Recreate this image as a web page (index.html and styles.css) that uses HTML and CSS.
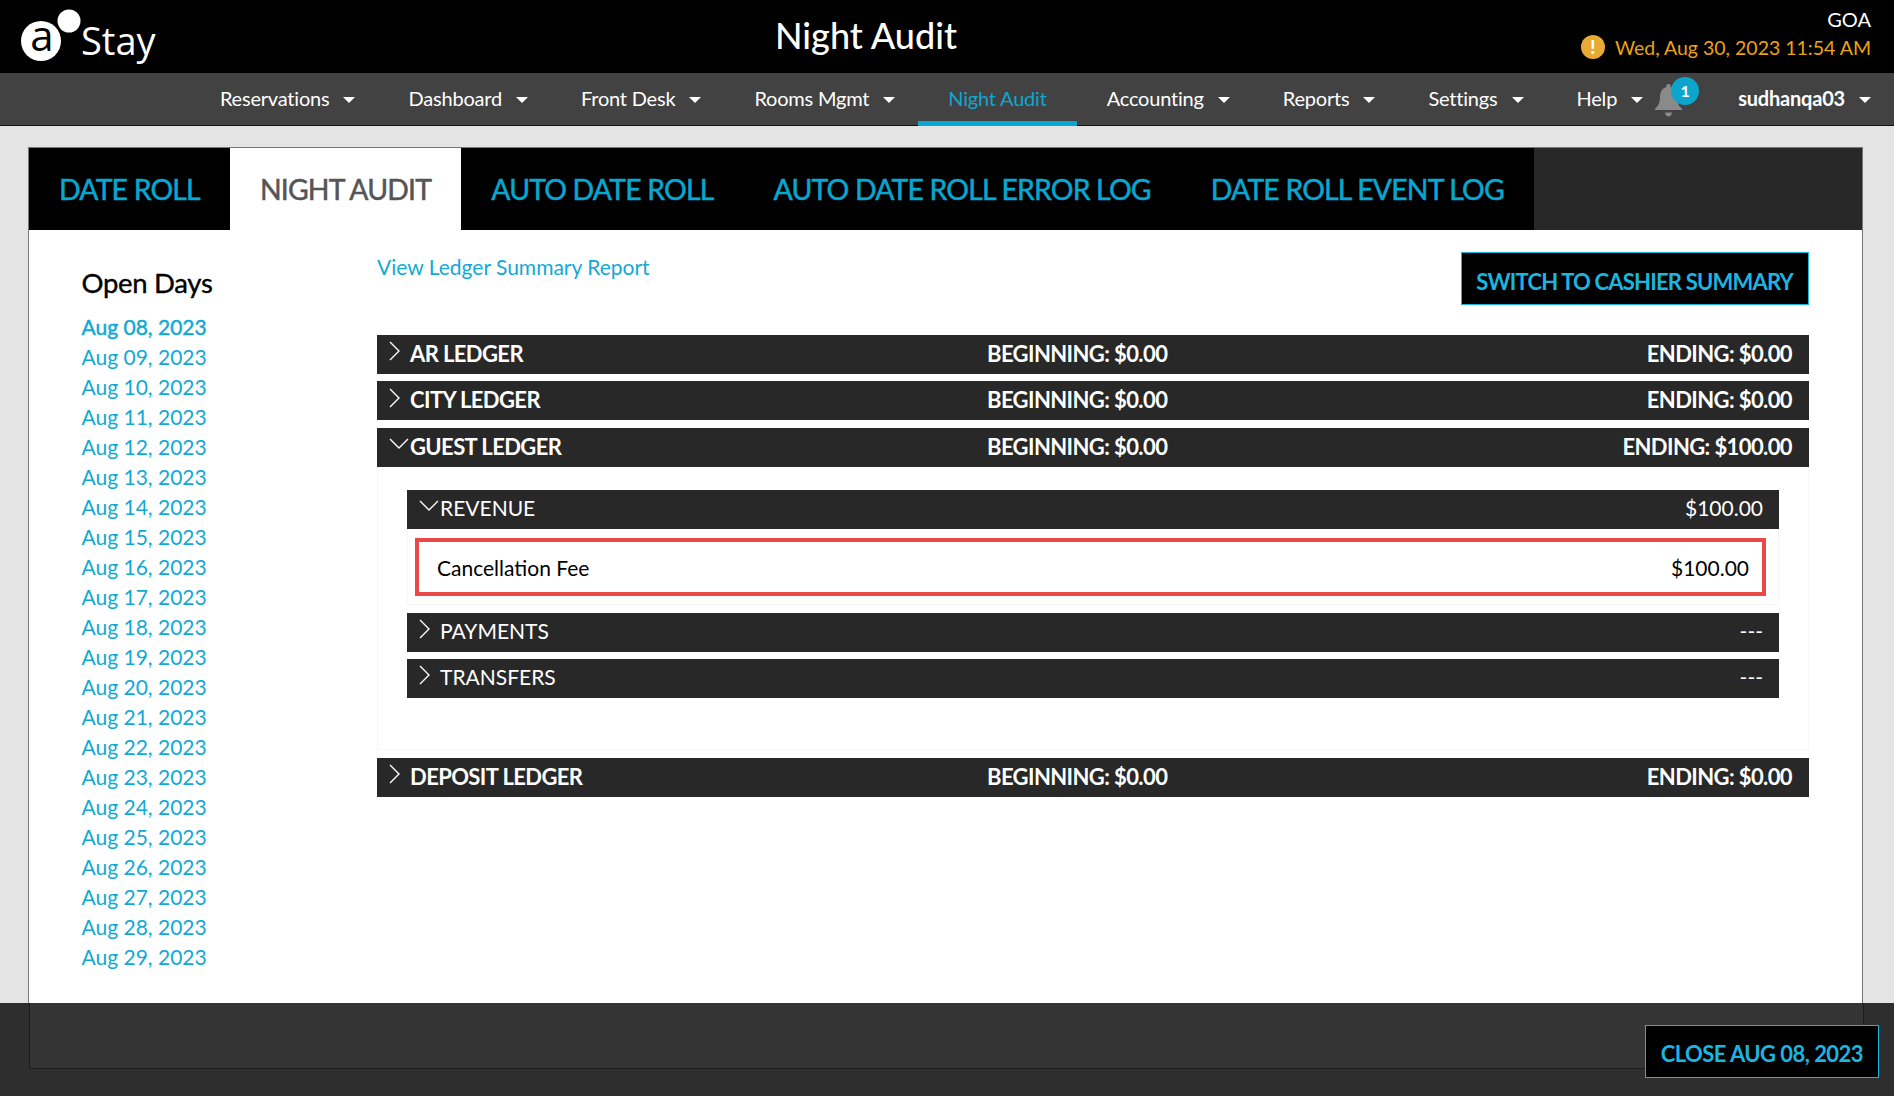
FILE: index.html
```html
<!DOCTYPE html>
<html lang="en">
<head>
<meta charset="utf-8">
<title>Night Audit</title>
<link rel="stylesheet" href="styles.css">
</head>
<body>
<header class="topbar">
  <div class="logo">
    <svg class="logo-mark" width="82" height="70" viewBox="0 0 82 70">
      <circle cx="41" cy="41" r="20" fill="#fff"/>
      <circle cx="69" cy="21" r="11.5" fill="#fff"/>
      <text x="42" y="51" text-anchor="middle" class="logo-a">a</text>
    </svg>
    <span class="logo-text">Stay</span>
  </div>
  <h1 class="page-title">Night Audit</h1>
  <div class="status">
    <div class="property">GOA</div>
    <div class="clock">
      <span class="warn">!</span>
      <span>Wed, Aug 30, 2023 11:54 AM</span>
    </div>
  </div>
</header>
<nav class="nav">
  <a class="nav-item">Reservations<i class="caret"></i></a>
  <a class="nav-item">Dashboard<i class="caret"></i></a>
  <a class="nav-item">Front Desk<i class="caret"></i></a>
  <a class="nav-item">Rooms Mgmt<i class="caret"></i></a>
  <a class="nav-item active">Night Audit</a>
  <a class="nav-item">Accounting<i class="caret"></i></a>
  <a class="nav-item">Reports<i class="caret"></i></a>
  <a class="nav-item">Settings<i class="caret"></i></a>
  <a class="nav-item help">Help<i class="caret"></i></a>
  <div class="bell">
    <svg width="27" height="33" viewBox="0 0 27 33">
      <path d="M13.5 0c1.4 0 2.2.9 2.2 2.2v.8c4.4 1.4 6.3 5.2 6.3 9.8 0 5.4 1.2 8.6 5 12.2v1H0v-1c3.800-3.600 5-6.800 5-12.200 0-4.600 1.900-8.400 6.300-9.800v-.8C11.300.9 12.100 0 13.500 0z" fill="#8a8a8a"/>
      <path d="M10 28.500h7c0 2.300-1.500 4-3.500 4s-3.500-1.700-3.500-4z" fill="#8a8a8a"/>
    </svg>
    <span class="badge">1</span>
  </div>
  <a class="nav-item user">sudhanqa03<i class="caret"></i></a>
</nav>
<main class="main">
  <section class="panel">
    <div class="tabs">
      <a class="tab">DATE ROLL</a>
      <a class="tab current">NIGHT AUDIT</a>
      <a class="tab">AUTO DATE ROLL</a>
      <a class="tab">AUTO DATE ROLL ERROR LOG</a>
      <a class="tab">DATE ROLL EVENT LOG</a>
    </div>
    <div class="content">
      <aside class="days">
        <h2 class="days-title">Open Days</h2>
        <ul class="days-list">
          <li class="day first">Aug 08, 2023</li>
          <li class="day">Aug 09, 2023</li>
          <li class="day">Aug 10, 2023</li>
          <li class="day">Aug 11, 2023</li>
          <li class="day">Aug 12, 2023</li>
          <li class="day">Aug 13, 2023</li>
          <li class="day">Aug 14, 2023</li>
          <li class="day">Aug 15, 2023</li>
          <li class="day">Aug 16, 2023</li>
          <li class="day">Aug 17, 2023</li>
          <li class="day">Aug 18, 2023</li>
          <li class="day">Aug 19, 2023</li>
          <li class="day">Aug 20, 2023</li>
          <li class="day">Aug 21, 2023</li>
          <li class="day">Aug 22, 2023</li>
          <li class="day">Aug 23, 2023</li>
          <li class="day">Aug 24, 2023</li>
          <li class="day">Aug 25, 2023</li>
          <li class="day">Aug 26, 2023</li>
          <li class="day">Aug 27, 2023</li>
          <li class="day">Aug 28, 2023</li>
          <li class="day">Aug 29, 2023</li>
        </ul>
      </aside>
      <div class="ledgers">
        <div class="ledgers-top">
          <a class="report-link">View Ledger Summary Report</a>
          <a class="action-btn">SWITCH TO CASHIER SUMMARY</a>
        </div>
        <div class="ledger-row">
          <svg class="chev" width="12" height="20" viewBox="0 0 12 20"><path d="M1 1l9 9-9 9" class="chev-line"/></svg>
          <span>AR LEDGER</span><span>BEGINNING: $0.00</span><span>ENDING: $0.00</span>
        </div>
        <div class="ledger-row">
          <svg class="chev" width="12" height="20" viewBox="0 0 12 20"><path d="M1 1l9 9-9 9" class="chev-line"/></svg>
          <span>CITY LEDGER</span><span>BEGINNING: $0.00</span><span>ENDING: $0.00</span>
        </div>
        <div class="ledger-row open">
          <svg class="chev" width="20" height="12" viewBox="0 0 20 12"><path d="M1 1l9 9 9-9" class="chev-line"/></svg>
          <span>GUEST LEDGER</span><span>BEGINNING: $0.00</span><span>ENDING: $100.00</span>
        </div>
        <div class="ledger-body">
          <div class="sub-row open">
            <svg class="chev" width="20" height="12" viewBox="0 0 20 12"><path d="M1 1l9 9 9-9" class="chev-line"/></svg>
            <span>REVENUE</span><span>$100.00</span>
          </div>
          <div class="sub-body">
            <div class="fee-row"><span>Cancellation Fee</span><span>$100.00</span></div>
          </div>
          <div class="sub-row">
            <svg class="chev" width="12" height="20" viewBox="0 0 12 20"><path d="M1 1l9 9-9 9" class="chev-line"/></svg>
            <span>PAYMENTS</span><span>---</span>
          </div>
          <div class="sub-row">
            <svg class="chev" width="12" height="20" viewBox="0 0 12 20"><path d="M1 1l9 9-9 9" class="chev-line"/></svg>
            <span>TRANSFERS</span><span>---</span>
          </div>
        </div>
        <div class="ledger-row">
          <svg class="chev" width="12" height="20" viewBox="0 0 12 20"><path d="M1 1l9 9-9 9" class="chev-line"/></svg>
          <span>DEPOSIT LEDGER</span><span>BEGINNING: $0.00</span><span>ENDING: $0.00</span>
        </div>
      </div>
    </div>
  </section>
</main>
<footer class="footer">
  <div class="footer-inner"></div>
  <a class="action-btn close-btn">CLOSE AUG 08, 2023</a>
</footer>
</body>
</html>
```
FILE: styles.css
```css
* { box-sizing: border-box; }
html, body { margin: 0; height: 1096px; overflow: hidden; }
body {
  display: flex;
  flex-direction: column;
  background: #e4e4e4;
  font-family: Lato, "Liberation Sans", sans-serif;
  color: #000;
}
.topbar {
  position: relative;
  flex: 0 0 73px;
  background: #000;
  color: #fff;
  display: flex;
  justify-content: space-between;
}
.logo { display: flex; align-items: flex-start; }
.logo-mark { display: block; }
.logo-a { font: 400 42px "Open Sans", sans-serif; fill: #000; }
.logo-text {
  font: 400 38px/1 "Open Sans", sans-serif;
  margin: 21px 0 0 -1px;
  color: #fff;
}
.page-title {
  position: absolute;
  left: 0;
  right: 162px;
  top: 12px;
  margin: 0;
  text-align: center;
  font-size: 36px;
  line-height: 46px;
  font-weight: 500;
}
.status {
  padding: 7px 23px 0 0;
  text-align: right;
  font-size: 20px;
  line-height: 24px;
}
.property { height: 25px; }
.clock {
  display: flex;
  align-items: center;
  gap: 10px;
  color: #eba317;
  margin-top: 4px;
  font-size: 19.500px;
}
.warn {
  width: 24px;
  height: 24px;
  margin-top: -2px;
  border-radius: 50%;
  background: #e9a935;
  color: #fff;
  font-weight: 900;
  font-size: 18px;
  line-height: 24px;
  text-align: center;
}
.nav {
  flex: 0 0 53px;
  background: #424242;
  box-shadow: inset 0 -1px 0 #111;
  display: flex;
  justify-content: flex-end;
  color: #fff;
  font-size: 20px;
  padding-right: 23px;
}
.nav-item {
  display: flex;
  align-items: center;
  padding: 0 23px 3px 30px;
  letter-spacing: -0.2px;
}
.nav-item.active {
  padding: 2px 30px 0;
  color: #0da7d0;
  border-bottom: 5px solid #07a7d1;
}
.nav-item.help { padding-right: 12px; }
.nav-item.user { padding: 0 0 3px 56px; font-weight: 700; }
.caret {
  display: block;
  margin: 3px 0 0 14px;
  border-left: 6px solid transparent;
  border-right: 6px solid transparent;
  border-top: 6px solid #fff;
}
.bell { position: relative; margin-top: 11px; width: 27px; }
.badge {
  position: absolute;
  left: 16px;
  top: -7px;
  width: 28px;
  height: 28px;
  border-radius: 50%;
  background: #0da5cc;
  color: #fff;
  font-size: 16px;
  font-weight: 700;
  line-height: 28px;
  text-align: center;
}
.main {
  flex: 1;
  min-height: 0;
  padding: 21px 31px 0 28px;
  display: flex;
}
.panel {
  flex: 1;
  background: #fff;
  border: 1px solid #777;
  border-bottom: 0;
  display: flex;
  flex-direction: column;
}
.tabs {
  flex: 0 0 82px;
  display: flex;
  background: #282828;
}
.tab {
  display: flex;
  align-items: center;
  padding: 0 30px;
  background: #000;
  color: #07a7d1;
  font-size: 28.400px;
  letter-spacing: -0.81px;
  -webkit-text-stroke: 0.5px currentColor;
}
.tab.current { background: #fff; color: #555; }
.content { flex: 1; display: flex; min-height: 0; }
.days { flex: 0 0 348px; padding: 34px 0 0 52.500px; }
.days-title {
  margin: 0 0 11px;
  font-size: 27.500px;
  line-height: 37px;
  font-weight: 400;
  letter-spacing: -0.3px;
  -webkit-text-stroke: 0.35px currentColor;
}
.days-list { list-style: none; margin: 0; padding: 0; }
.day { font-size: 21px; line-height: 30px; color: #11a9d4; }
.day.first { -webkit-text-stroke: 0.45px currentColor; }
.ledgers { width: 1432px; padding-top: 22px; }
.ledgers-top {
  display: flex;
  justify-content: space-between;
  align-items: flex-start;
  margin-bottom: 29.900px;
}
.report-link {
  color: #11a9d4;
  font-size: 21px;
  line-height: 30px;
}
.action-btn {
  display: flex;
  align-items: center;
  height: 53px;
  padding: 5px 15px 0 14px;
  background: #000;
  border: 1.500px solid #1cb5e0;
  color: #1cb5e0;
  font-size: 22px;
  font-weight: 700;
  letter-spacing: -0.8px;
}
.ledger-row {
  display: grid;
  grid-template-columns: 33px 577px 1fr auto;
  align-items: center;
  height: 39px;
  margin-bottom: 7.500px;
  padding: 0 17px 2px 0;
  background: #282828;
  color: #fff;
  font-size: 22px;
  font-weight: 700;
  letter-spacing: -0.6px;
}
.ledger-row.open { margin-bottom: 0; }
.chev { justify-self: start; margin: -4px 0 0 12px; overflow: visible; }
.chev-line { fill: none; stroke: #fff; stroke-width: 1.400px; }
.ledger-body {
  border: 1px solid #f6f6f6;
  border-top: 0;
  padding: 23px 29px 0;
  height: 283px;
  margin-bottom: 8px;
}
.sub-row {
  display: grid;
  grid-template-columns: 33px 1fr auto;
  align-items: center;
  height: 39px;
  margin-bottom: 7px;
  padding: 0 16px 3px 0;
  background: #282828;
  color: #fff;
  font-size: 21px;
}
.sub-row.open { margin-bottom: 0; }
.sub-body {
  border: 1px solid #f6f6f6;
  border-top: 0;
  padding: 9px 12px 8px 7px;
}
.sub-body + .sub-row { margin-top: 8px; }
.fee-row {
  display: flex;
  justify-content: space-between;
  align-items: center;
  height: 58px;
  padding: 2px 13px 0 18px;
  border: 4px solid #e84a4a;
  font-size: 21px;
}
.footer {
  position: relative;
  flex: 0 0 93px;
  background: #2e2e2e;
}
.footer-inner {
  margin: 0 30px 0 29px;
  height: 66px;
  background: #343434;
  border: 1px solid #1c1c1c;
  border-top: 0;
}
.close-btn {
  position: absolute;
  right: 15px;
  top: 22px;
  padding: 4px 15px 0;
  letter-spacing: -0.55px;
}
```
